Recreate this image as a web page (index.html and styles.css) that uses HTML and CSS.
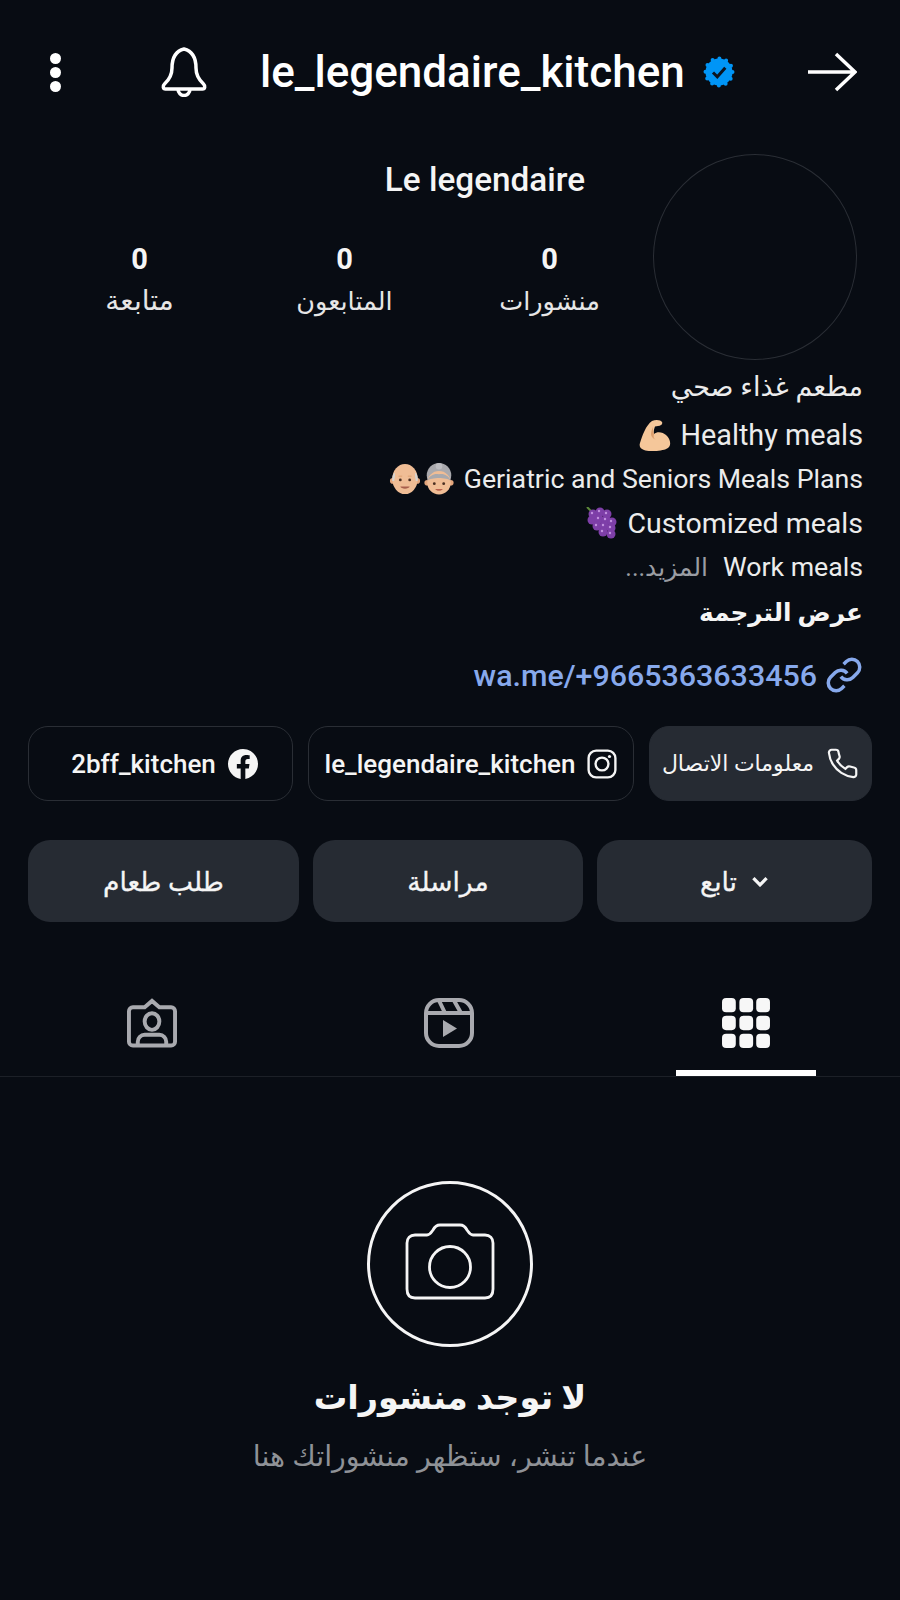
FILE: index.html
```html
<!DOCTYPE html>
<html lang="ar" dir="rtl">
<head>
    <meta charset="UTF-8">
    <meta name="viewport" content="width=device-width, initial-scale=1.0">
    <title>le_legendaire_kitchen</title>
    <link rel="stylesheet" href="styles.css">
</head>
<body>
    <header class="topbar">
        <svg class="arrow" viewBox="0 0 50 40"><path d="M1 20H47M29 2L48 20L29 38"/></svg>
        <svg class="badge" viewBox="0 0 32 32">
            <circle class="badge-bg" cx="16" cy="16" r="13.5"/>
            <path class="badge-check" d="M10 16.5L14.3 20.8L22.3 11.8"/>
        </svg>
        <div class="username" dir="ltr">le_legendaire_kitchen</div>
        <svg class="bell" viewBox="0 0 48 50"><path d="M24 2C16 4 12 11 12 21C12 28 10 32 4.500 37C2.500 39 3 42 5.500 42H42.500C45 42 45.500 39 43.500 37C38 32 36 28 36 21C36 11 32 4 24 2Z"/><path d="M18 42C18 46 21 48.500 24 48.500C27 48.500 30 46 30 42"/></svg>
        <svg class="dots" viewBox="0 0 11 39"><circle cx="5.500" cy="5.500" r="5.500"/><circle cx="5.500" cy="19.500" r="5.500"/><circle cx="5.500" cy="33.500" r="5.500"/></svg>
    </header>

    <section class="profile">
        <div class="avatar"></div>
        <div class="profile-main">
            <div class="name" dir="ltr">Le legendaire</div>
            <div class="stats">
                <div class="stat"><b>0</b><span>منشورات</span></div>
                <div class="stat"><b>0</b><span>المتابعون</span></div>
                <div class="stat"><b>0</b><span class="stat-short">متابعة</span></div>
            </div>
        </div>
    </section>

    <section class="bio">
        <div class="bio-line first">مطعم غذاء صحي</div>
        <div class="bio-line">
            <span>Healthy meals</span>
            <svg class="emoji" viewBox="0 0 32 32">
                <path fill="#f5c79a" d="M13 2C17 0 22 1 23 3C24 5 22 7 19 7L16 7.500C15 10 14.500 13 15 15C18 12 24 13 27 16C31 19 33 26 29 29C25 32 11 33 5 31C1 30 0 27 1 24C3 17 7 6 13 2Z"/>
                <path fill="#dd9f6e" d="M15 15C14 18 15 20 17 21C15 20 12 18 12 15C12 13 13 10 14 8C14 11 14 13 15 15Z"/>
            </svg>
        </div>
        <div class="bio-line geriatric">
            <span>Geriatric and Seniors Meals Plans</span>
            <span class="emoji-pair">
                <svg class="emoji" viewBox="0 0 32 34">
                    <circle cx="16" cy="13" r="13" fill="#a9a9ad"/>
                    <circle cx="16" cy="3.500" r="3.500" fill="#bdbdc1"/>
                    <circle cx="3.500" cy="21" r="3" fill="#e4a67c"/><circle cx="28.500" cy="21" r="3" fill="#e4a67c"/>
                    <ellipse cx="16" cy="21" rx="12.500" ry="12.500" fill="#f0bd95"/>
                    <path fill="#a9a9ad" d="M3.500 19C6 13 11 11 16 12C21 11 26 13 28.500 19C24 15 8 15 3.500 19Z"/>
                    <circle cx="11" cy="22" r="1.500" fill="#4a2f22"/><circle cx="21" cy="22" r="1.500" fill="#4a2f22"/>
                    <path fill="#b9614d" d="M12 27.500H20C19 30 13 30 12 27.500Z"/>
                </svg>
                <svg class="emoji" viewBox="0 0 32 34">
                    <circle cx="3" cy="19" r="3" fill="#e4a67c"/><circle cx="29" cy="19" r="3" fill="#e4a67c"/>
                    <ellipse cx="16" cy="17" rx="13.500" ry="16" fill="#f0bd95"/>
                    <path fill="#d8d4d0" d="M2.500 19C2 15 3 12 5 10C6 13 5 16 4.500 19ZM29.500 19C30 15 29 12 27 10C26 13 27 16 27.500 19Z"/>
                    <path fill="none" stroke="#dd9f6e" stroke-width="1" d="M9 14H13M19 14H23"/>
                    <circle cx="11" cy="18" r="1.500" fill="#4a2f22"/><circle cx="21" cy="18" r="1.500" fill="#4a2f22"/>
                    <path fill="#a85f4c" d="M11 25H21C20 28 12 28 11 25Z"/>
                </svg>
            </span>
        </div>
        <div class="bio-line customized">
            <span>Customized meals</span>
            <svg class="emoji" viewBox="0 0 32 32">
                <path d="M1 0L8 7" stroke="#5d8a3a" stroke-width="2"/>
                <g fill="#7e3fa8">
                    <circle cx="7" cy="7" r="4.500"/><circle cx="14" cy="5" r="4.500"/><circle cx="21" cy="7" r="4.500"/>
                    <circle cx="6" cy="13" r="4.500"/><circle cx="13" cy="12" r="4.500"/><circle cx="20" cy="13" r="4.500"/><circle cx="26" cy="15" r="4.500"/>
                    <circle cx="11" cy="19" r="4.500"/><circle cx="18" cy="19" r="4.500"/><circle cx="25" cy="21" r="4.500"/>
                    <circle cx="17" cy="25" r="4.500"/><circle cx="25" cy="27" r="4.500"/>
                </g>
                <g fill="#c291e0">
                    <circle cx="6" cy="6" r="1.200"/><circle cx="13" cy="4" r="1.200"/><circle cx="20" cy="6" r="1.200"/><circle cx="12" cy="11" r="1.200"/><circle cx="19" cy="12" r="1.200"/><circle cx="25" cy="14" r="1.200"/><circle cx="10" cy="18" r="1.200"/><circle cx="17" cy="18" r="1.200"/><circle cx="24" cy="20" r="1.200"/><circle cx="16" cy="24" r="1.200"/><circle cx="24" cy="26" r="1.200"/>
                </g>
            </svg>
        </div>
        <div class="bio-line work">
            <span>Work meals</span>
            <span class="more">المزيد...</span>
        </div>
        <div class="bio-line translate">عرض الترجمة</div>
        <div class="bio-line link">
            <svg class="link-icon" viewBox="0 0 24 24"><path d="M10 13a5 5 0 0 0 7.540.540l3-3a5 5 0 0 0-7.070-7.070l-1.720 1.710"/><path d="M14 11a5 5 0 0 0-7.540-.540l-3 3a5 5 0 0 0 7.070 7.070l1.710-1.710"/></svg>
            <span dir="ltr">wa.me/+9665363633456</span>
        </div>
    </section>

    <section class="chips">
        <div class="chip filled">
            <svg class="chip-icon phone" viewBox="0 0 24 24"><path d="M22 16.920v3a2 2 0 0 1-2.180 2 19.790 19.790 0 0 1-8.630-3.070 19.500 19.500 0 0 1-6-6 19.790 19.790 0 0 1-3.070-8.670A2 2 0 0 1 4.110 2h3a2 2 0 0 1 2 1.720c.13.96.36 1.900.7 2.810a2 2 0 0 1-.45 2.110L8.090 9.910a16 16 0 0 0 6 6l1.270-1.270a2 2 0 0 1 2.110-.45c.91.34 1.850.57 2.810.7A2 2 0 0 1 22 16.920z"/></svg>
            <span class="chip-ar">معلومات الاتصال</span>
        </div>
        <div class="chip">
            <svg class="chip-icon ig" viewBox="0 0 28 28"><rect x="1.500" y="1.500" width="25" height="25" rx="7"/><circle cx="14" cy="14" r="6"/><circle class="ig-dot" cx="21" cy="7" r="1.500"/></svg>
            <span dir="ltr">le_legendaire_kitchen</span>
        </div>
        <div class="chip chip-facebook">
            <svg class="chip-fb" viewBox="0 0 24 24"><path d="M24 12.070C24 5.400 18.630 0 12 0S0 5.400 0 12.070c0 6.030 4.390 11.020 10.130 11.930v-8.440H7.080v-3.490h3.050V9.410c0-3.020 1.790-4.690 4.530-4.690 1.310 0 2.680.24 2.680.24v2.970h-1.510c-1.490 0-1.960.93-1.960 1.890v2.250h3.330l-.53 3.490h-2.800V24C19.610 23.090 24 18.100 24 12.070z"/></svg>
            <span dir="ltr">2bff_kitchen</span>
        </div>
    </section>

    <section class="actions">
        <div class="action">
            <svg class="chevron" viewBox="0 0 16 10"><path d="M2 2L8 8L14 2"/></svg>
            <span>تابع</span>
        </div>
        <div class="action">مراسلة</div>
        <div class="action">طلب طعام</div>
    </section>

    <nav class="tabs">
        <div class="tab active">
            <svg class="tab-icon" viewBox="0 0 47 49"><g class="grid-fill"><rect x="0" y="0" width="13.500" height="14" rx="4"/><rect x="17" y="0" width="13.500" height="14" rx="4"/><rect x="33.500" y="0" width="13.500" height="14" rx="4"/><rect x="0" y="17.500" width="13.500" height="14" rx="4"/><rect x="17" y="17.500" width="13.500" height="14" rx="4"/><rect x="33.500" y="17.500" width="13.500" height="14" rx="4"/><rect x="0" y="35" width="13.500" height="14" rx="4"/><rect x="17" y="35" width="13.500" height="14" rx="4"/><rect x="33.500" y="35" width="13.500" height="14" rx="4"/></g></svg>
            <div class="indicator"></div>
        </div>
        <div class="tab">
            <svg class="tab-icon" viewBox="0 0 50 50"><rect x="2" y="2" width="46" height="46" rx="13"/><path d="M2.500 15H47.500M15 2.500L21 15M30 2.500L37 15"/><path class="play" d="M19 22L33 30.500L19 39Z"/></svg>
            <div class="indicator"></div>
        </div>
        <div class="tab">
            <svg class="tab-icon" viewBox="0 0 51 50"><path d="M6 9H18L25.500 2.500L33 9H45A4 4 0 0 1 49 13V44A4 4 0 0 1 45 48H6A4 4 0 0 1 2 44V13A4 4 0 0 1 6 9Z"/><ellipse cx="25.500" cy="23.500" rx="7.500" ry="8.500"/><path d="M11 47V44A7 7 0 0 1 18 37H33A7 7 0 0 1 40 44V47"/></svg>
            <div class="indicator"></div>
        </div>
    </nav>

    <section class="empty">
        <div class="empty-ring">
            <svg class="camera" viewBox="0 0 90 78"><path d="M10 12H22C25 12 26 10 28 7C30 3 32 2 35 2H55C58 2 60 3 62 7C64 10 65 12 68 12H80C85 12 88 15 88 20V66C88 72 85 75 80 75H10C5 75 2 72 2 66V20C2 15 5 12 10 12Z"/><circle cx="45" cy="44" r="20.500"/></svg>
        </div>
        <h2 class="empty-title">لا توجد منشورات</h2>
        <p class="empty-sub">عندما تنشر، ستظهر منشوراتك هنا</p>
    </section>
</body>
</html>
```

FILE: styles.css
```css
body { margin: 0; height: 1600px; background: #080c13; color: #f5f5f5; font-family: Roboto, "DejaVu Sans", sans-serif; overflow: hidden; }
svg { display: block; flex: none; }

.topbar { display: flex; align-items: center; height: 60px; padding: 42px 43px 0 0; }
.arrow { width: 50px; height: 40px; fill: none; stroke: #fff; stroke-width: 3.5; }
.badge { width: 32px; height: 32px; margin-right: 72px; }
.badge-bg { fill: #0095f6; stroke: #0095f6; stroke-width: 4; stroke-dasharray: 0 7.07; stroke-linecap: round; }
.badge-check { fill: none; stroke: #0b1420; stroke-width: 3; }
.username { width: 424px; margin-right: 19px; font-size: 44px; font-weight: 500; line-height: 60px; color: #fff; white-space: nowrap; }
.bell { width: 48px; height: 50px; margin-right: 52px; fill: none; stroke: #fff; stroke-width: 3.5; }
.dots { width: 11px; height: 39px; margin-right: 99px; fill: #fff; }

.profile { display: flex; margin-top: 52px; padding-right: 43px; }
.avatar { width: 202px; height: 204px; border: 1.5px solid #2a2e35; border-radius: 50%; flex: none; }
.profile-main { display: flex; flex-direction: column; flex: 1; }
.name { align-self: flex-start; margin-right: 68px; padding-top: 6px; font-size: 33.300px; font-weight: 500; line-height: 40px; white-space: nowrap; }
.stats { display: flex; margin-top: 39px; padding-right: 1px; }
.stat { display: flex; flex-direction: column; align-items: center; width: 205px; }
.stat b { font-size: 29px; font-weight: 700; line-height: 40px; }
.stat span { font-size: 25.500px; line-height: 44px; color: #e6e6e6; }
.stat .stat-short { font-size: 28px; }

.bio { margin-top: 5px; padding-right: 37px; }
.bio-line { display: flex; align-items: center; gap: 9px; height: 44px; font-size: 28.800px; white-space: nowrap; color: #ececec; }
.bio-line.first { margin-bottom: 4px; font-size: 27px; }
.bio-line.geriatric { font-size: 26.700px; }
.bio-line.customized { font-size: 28.500px; }
.bio-line.work { font-size: 26.700px; }
.emoji { width: 32px; height: 32px; }
.emoji-pair { display: flex; gap: 2px; }
.more { margin-right: 6px; font-size: 25px; color: #9a9da3; }
.translate { margin-top: 1px; font-weight: 700; font-size: 24.700px; color: #f5f5f5; }
.link { margin-top: 19px; font-size: 30.400px; font-weight: 500; color: #87a9ec; gap: 8px; }
.link-icon { width: 38px; height: 38px; fill: none; stroke: #87a9ec; stroke-width: 2.2; }

.chips { display: grid; grid-template-columns: 223px 326px 1fr; gap: 15px; margin: 29px 28px 0 28px; }
.chip { display: flex; align-items: center; justify-content: center; gap: 12px; height: 73px; border: 1px solid #2a2e35; border-radius: 20px; font-size: 26px; font-weight: 500; white-space: nowrap; }
.chip.filled { background: #262b33; border-color: #262b33; }
.chip-facebook { padding-left: 8px; }
.chip-ar { font-size: 22px; font-weight: 400; }
.chip-icon { width: 30px; height: 30px; fill: none; stroke: #f5f5f5; stroke-width: 1.6; }
.chip-icon.phone { width: 33px; height: 33px; }
.chip-icon.ig { stroke-width: 2.2; }
.ig-dot { fill: #f5f5f5; stroke: none; }
.chip-fb { width: 30px; height: 30px; fill: #f5f5f5; }

.actions { display: grid; grid-template-columns: 275px 270px 1fr; gap: 14px; margin: 39px 28px 0 28px; }
.action { display: flex; align-items: center; justify-content: center; gap: 14px; height: 82px; background: #262b33; border-radius: 22px; font-size: 26.500px; -webkit-text-stroke: 0.3px #f5f5f5; }
.chevron { width: 18px; height: 11px; fill: none; stroke: #f5f5f5; stroke-width: 3; }

.tabs { display: grid; grid-template-columns: repeat(3, 1fr); margin-top: 50px; padding: 0 6px 0 4px; border-bottom: 1px solid #1c2027; }
.tab { display: flex; flex-direction: column; align-items: center; padding-top: 26px; }
.tab-icon { height: 50px; width: 50px; fill: none; stroke: #a9aaaf; stroke-width: 4; }
.grid-fill { fill: #f7f7f7; stroke: none; }
.play { fill: #a9aaaf; stroke: none; }
.indicator { width: 140px; height: 6px; margin-top: 22px; }
.tab.active .indicator { background: #fff; }

.empty { display: flex; flex-direction: column; align-items: center; padding-top: 104px; }
.empty-ring { display: flex; align-items: center; justify-content: center; width: 160px; height: 160px; border: 3px solid #f5f5f5; border-radius: 50%; }
.camera { width: 90px; height: 78px; margin-bottom: 4px; fill: none; stroke: #f5f5f5; stroke-width: 2.800; }
.empty-title { margin: 26px 0 0; font-size: 33.500px; font-weight: 700; line-height: 50px; color: #f5f5f5; }
.empty-sub { margin: 12px 0 0; font-size: 28.500px; line-height: 44px; color: #8f9297; }
```
